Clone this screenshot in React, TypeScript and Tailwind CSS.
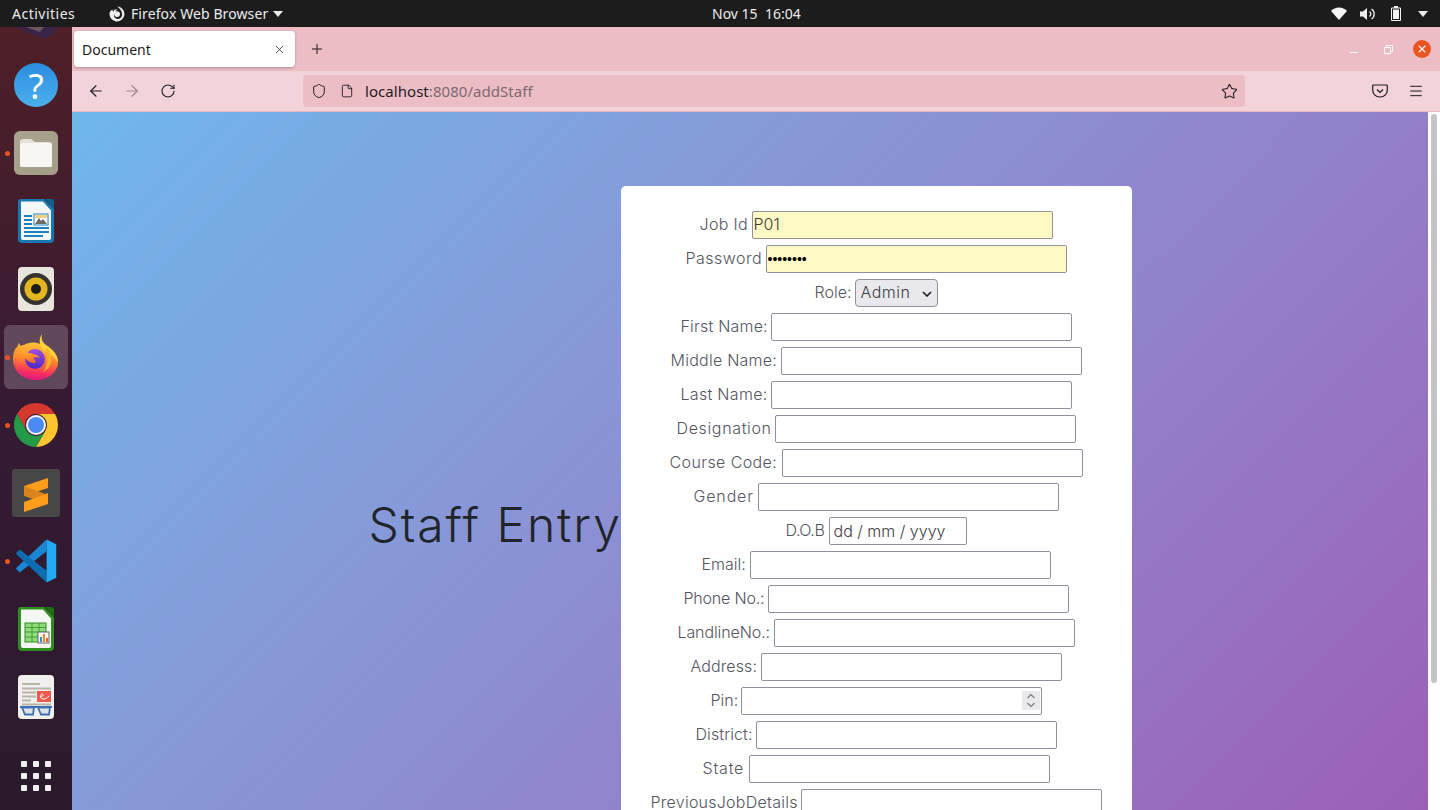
import React from "react";
import { X, Plus, ArrowLeft, ArrowRight, RotateCw, Shield, File, Star, Menu } from "lucide-react";

const ui = "font-['Noto_Sans',sans-serif]";

function Help() {
  return (
    <div className="relative flex h-[44px] w-[44px] items-center justify-center overflow-hidden rounded-full bg-linear-to-b from-[#2a8ddf] to-[#4cb0ec] font-['Noto_Sans',sans-serif] text-[35px] font-normal leading-none text-white">?</div>
  );
}
function Files() {
  return (
    <svg width="44" height="44" viewBox="0 0 44 44">
      <defs><linearGradient id="fb" x1="0" y1="0" x2="1" y2="1"><stop offset="0" stopColor="#a9a390" /><stop offset="1" stopColor="#a39c85" /></linearGradient></defs>
      <rect width="44" height="44" rx="6" fill="url(#fb)" />
      <path d="M6 11a3 3 0 0 1 3-3h8l4 3h15a3 3 0 0 1 2 3v20a2 2 0 0 1-2 2H8a2 2 0 0 1-2-2z" fill="#e4e1d9" />
      <path d="M6 15a3 3 0 0 1 3-3h27a2 2 0 0 1 2 2v20a2 2 0 0 1-2 2H8a2 2 0 0 1-2-2z" fill="#f7f6f4" />
    </svg>
  );
}
function Writer() {
  return (
    <svg width="36" height="44" viewBox="0 0 36 44">
      <path d="M2 0h24l10 10v30a4 4 0 0 1-4 4H4a4 4 0 0 1-4-4V3a3 3 0 0 1 2-3z" fill="#1878b0" />
      <path d="M27 0h6a3 3 0 0 1 3 3v7z" fill="#12628f" />
      <path d="M3 2.500h22l8 9V39a2 2 0 0 1-2 2H5a2 2 0 0 1-2-2z" fill="#f4f6f7" />
      <path d="M6 16h8v2H6zM6 20h8v2H6zM6 24h8v2H6zM6 28h25v2H6zM6 32h25v2H6zM6 36h19v2H6z" fill="#1b83bf" />
      <rect x="16" y="15" width="14" height="11" fill="#fff" stroke="#1b83bf" strokeWidth="1" />
      <path d="M17 25l4-6 2 3 2-2 4 5z" fill="#6b6b60" />
      <rect x="17" y="16" width="12" height="3" fill="#f3cf7e" />
    </svg>
  );
}
function Rhythm() {
  return (
    <svg width="36" height="44" viewBox="0 0 36 44">
      <rect width="36" height="44" rx="4" fill="#e8e5dd" />
      <circle cx="18" cy="22" r="16" fill="#35332f" />
      <circle cx="18" cy="22" r="11.500" fill="#e3b620" />
      <circle cx="18" cy="22" r="5" fill="#1d1b18" />
    </svg>
  );
}
function Firefox() {
  return (
    <svg width="46" height="46" viewBox="0 0 46 46">
      <defs>
        <linearGradient id="ff1" x1="0.6" y1="0" x2="0.45" y2="1"><stop offset="0" stopColor="#ffc53a" /><stop offset="0.45" stopColor="#ff8a2a" /><stop offset="0.8" stopColor="#f5305d" /><stop offset="1" stopColor="#e31587" /></linearGradient>
        <linearGradient id="ff2" x1="0.5" y1="0" x2="0.5" y2="1"><stop offset="0" stopColor="#9c4fe8" /><stop offset="1" stopColor="#4a2bc0" /></linearGradient>
        <linearGradient id="ff3" x1="0" y1="0" x2="0.3" y2="1"><stop offset="0" stopColor="#ffb52e" /><stop offset="1" stopColor="#ff6b2a" /></linearGradient>
      </defs>
      <path d="M6 9c1 1 1 2 1 3 2-1 3-1 4-1 3-2 8-3 13-2 5 1 9 3 12 6 5 4 9 8 9 13 0 10-10 18-22 18S0 38 0 25c0-6 2-10 3-11 1 0 2-3 3-5z" fill="url(#ff1)" />
      <path d="M29 0c-1 5 0 8 4 11 6 4 12 9 12 17-2-2-4-5-7-7-5-3-10-6-11-11-1-4 0-7 2-10z" fill="#ffd23c" />
      <circle cx="22" cy="25" r="10" fill="url(#ff2)" />
      <path d="M9 16c3 1 6 3 8 3 3 1 8 1 10 5-2-1-5-1-7 0 2 1 3 3 2 5-3 0-7-1-10-5-2-2-3-5-3-8z" fill="url(#ff3)" />
      <path d="M33 13c4 4 6 9 5 15-1 5-4 8-8 10 4-5 5-11 4-16-1-4-1-6-1-9z" fill="#ffae2e" />
    </svg>
  );
}
function Chrome() {
  return (
    <svg width="44" height="44" viewBox="0 0 44 44">
      <path d="M22 0A22 22 0 0 1 41 11H22A11 11 0 0 0 12.500 27.500L3 11A22 22 0 0 1 22 0z" fill="#d5382c" />
      <path d="M41 11A22 22 0 0 1 22 44L31.500 27.500A11 11 0 0 0 22 11z" fill="#fbc52e" />
      <path d="M3 11A22 22 0 0 0 22 44L31.500 27.500A11 11 0 0 1 12.500 27.500z" fill="#249a48" />
      <circle cx="22" cy="22" r="10" fill="#f4f6fb" />
      <circle cx="22" cy="22" r="8" fill="#4a8af4" />
    </svg>
  );
}
function Sublime() {
  return (
    <svg width="48" height="48" viewBox="0 0 48 48">
      <rect width="48" height="48" rx="3" fill="#474747" />
      <path d="M36 9v10L12 27v-10z" fill="#fd9d1b" />
      <path d="M12 17l24 9v9L12 27z" fill="#d9831b" />
      <path d="M36 24v11l-24 8V33z" fill="#fd9d1b" />
    </svg>
  );
}
function VSCode() {
  return (
    <svg width="44" height="44" viewBox="0 0 100 100">
      <path d="M74 1L4 67l9 9L74 28z" fill="#1a87d4" />
      <path d="M74 99L4 33l9-9L74 72z" fill="#0e6cb3" />
      <path d="M74 1l22 11v76L74 99z" fill="#23a8f2" />
    </svg>
  );
}
function Calc() {
  return (
    <svg width="36" height="44" viewBox="0 0 36 44">
      <path d="M2 0h24l10 10v30a4 4 0 0 1-4 4H4a4 4 0 0 1-4-4V3a3 3 0 0 1 2-3z" fill="#2f8f1e" />
      <path d="M27 0h6a3 3 0 0 1 3 3v7z" fill="#1f6f13" />
      <path d="M3 2.500h22l8 9V39a2 2 0 0 1-2 2H5a2 2 0 0 1-2-2z" fill="#f4f6f3" />
      <rect x="7" y="16" width="21" height="19" fill="#8fdc7d" stroke="#2f8f1e" strokeWidth="1" />
      <path d="M7 20.500h21M7 25h21M7 30h21M14 16v19M21 16v19" stroke="#2f8f1e" strokeWidth="0.800" />
      <rect x="20" y="25" width="11" height="11" fill="#f6f6f6" stroke="#666" strokeWidth="1" />
      <rect x="22" y="30" width="2" height="5" fill="#2f8fd0" />
      <rect x="25" y="27" width="2" height="8" fill="#ee8a1e" />
      <rect x="28" y="31" width="2" height="4" fill="#e8682a" />
    </svg>
  );
}
function Reader() {
  return (
    <svg width="36" height="44" viewBox="0 0 36 44">
      <rect width="36" height="44" rx="4" fill="#f1f0ee" />
      <path d="M4 8h18v2H4zM4 12.500h29v2H4zM4 16.500h14v2H4zM4 20.500h14v2H4zM4 24.500h9v2H4zM4 28.500h29v2H4z" fill="#b9b4a6" />
      <rect x="19" y="16" width="14" height="11" fill="#ef5a4f" />
      <path d="M22 22c3 0 4-3 2-3s-2 5 1 5 4-1 6-3" stroke="#fff" strokeWidth="1" fill="none" />
      <path d="M2 32h32M4 32.500h12l-1 7H7zM20 32.500h12l-1 7h-8z" fill="#dfe3e6" stroke="#3f6fb5" strokeWidth="1.800" />
    </svg>
  );
}

function DockItem({ children, active, dot }: { children: React.ReactNode; active?: boolean; dot?: boolean }) {
  return (
    <div className="relative flex h-[68px] w-[72px] shrink-0 items-center justify-center">
      {active && <div className="absolute left-1 top-[2px] h-[64px] w-[64px] rounded-[6px] bg-white/20" />}
      {dot && <div className="absolute left-[5px] top-[32px] h-[5px] w-[5px] rounded-full bg-[#e95420]" />}
      <div className="relative flex">{children}</div>
    </div>
  );
}

function Dock() {
  return (
    <div className="flex h-[783px] w-[72px] shrink-0 flex-col overflow-hidden bg-linear-to-b from-[#4f1f27] via-[#351a33] to-[#2a1a2c]">
      <div className="relative h-[24px] shrink-0">
        <svg width="72" height="14" viewBox="0 0 72 14" className="absolute left-0 top-0">
          <path d="M16 0h42l-6 8-8 4-8-3-10-4z" fill="#3a2448" />
          <path d="M26 0h18l-4 5z" fill="#6a5660" />
        </svg>
      </div>
      <DockItem><Help /></DockItem>
      <DockItem dot><Files /></DockItem>
      <DockItem><Writer /></DockItem>
      <DockItem><Rhythm /></DockItem>
      <DockItem active dot><Firefox /></DockItem>
      <DockItem dot><Chrome /></DockItem>
      <DockItem><Sublime /></DockItem>
      <DockItem dot><VSCode /></DockItem>
      <DockItem><Calc /></DockItem>
      <DockItem><Reader /></DockItem>
      <div className="mt-[30px] grid w-[72px] shrink-0 grid-cols-[6px_6px_6px] justify-center gap-[6px]">
        {Array.from({ length: 9 }).map((_, i) => (
          <div key={i} className="h-[6px] w-[6px] rounded-[1px] bg-[#efefef]" />
        ))}
      </div>
    </div>
  );
}

function TopBar() {
  return (
    <div className={`${ui} relative flex h-[27px] shrink-0 items-center bg-[#1c1c1c] text-[14px] text-[#ececec]`}>
      <span className="ml-[12px] w-[63px] whitespace-nowrap tracking-[0.5px]">Activities</span>
      <div className="ml-[34px] flex items-center">
        <svg width="16" height="16" viewBox="0 0 16 16">
          <path d="M8 .500a7.500 7.500 0 1 1-7.300 5.800C1.500 5 2.500 4 3.500 3.500 3.500 5 4 5.500 4.500 5.500 5 4 6.500 3 8.500 3.500 7 4 6.500 5 7 5.500c2-.5 4 .5 4 2.500 0 2-1.500 3.500-3.500 3C6 10.500 5 9 5 8c-.5 3 1 5 3.500 5 3 0 5-2.500 4.500-5.500C12.500 4.500 10.500 2 8 .500z" fill="#ececec" />
        </svg>
        <span className="ml-[6px] whitespace-nowrap tracking-[0.1px]">Firefox Web Browser</span>
        <svg width="10" height="6" viewBox="0 0 10 6" className="ml-[5px]"><path d="M0 0h10L5 6z" fill="#ececec" /></svg>
      </div>
      <span className="absolute left-[712px] whitespace-pre">Nov 15  16:04</span>
      <div className="ml-auto flex items-center">
        <svg width="16" height="13" viewBox="0 0 16 13"><path d="M0 4C2 2 5 .500 8 .500S14 2 16 4l-8 9z" fill="#f4f4f4" /></svg>
        <svg width="16" height="14" viewBox="0 0 16 14" className="ml-[13px]">
          <path d="M0 4.500h3L7 1v12L3 9.500H0z" fill="#ececec" />
          <path d="M9.500 4.500a3 3 0 0 1 0 5M11.500 2a6 6 0 0 1 0 10" stroke="#ececec" strokeWidth="1.300" fill="none" />
        </svg>
        <svg width="10" height="15" viewBox="0 0 10 15" className="ml-[15px]">
          <path d="M3 0h4v1.500h2a1 1 0 0 1 1 1V14a1 1 0 0 1-1 1H1a1 1 0 0 1-1-1V2.500a1 1 0 0 1 1-1h2z" fill="#f2f2f2" />
          <rect x="1" y="2.500" width="8" height="11.500" fill="#1c1c1c" />
          <rect x="2" y="3.500" width="6" height="9.500" fill="#f2f2f2" />
        </svg>
        <svg width="10" height="6" viewBox="0 0 10 6" className="ml-[17px] mr-[12px]"><path d="M0 0h10L5 6z" fill="#ececec" /></svg>
      </div>
    </div>
  );
}

function TabBar() {
  return (
    <div className={`${ui} flex h-[44px] shrink-0 items-center bg-[#edbdc5]`}>
      <div className="ml-[2px] flex h-[36px] w-[221px] items-center rounded-[4px] bg-white pl-[8px] pr-[9px] text-[14px] text-[#1c1b22] shadow-[0_1px_3px_rgba(0,0,0,0.25)]">
        <span>Document</span>
        <X size={13} strokeWidth={1.4} className="ml-auto" />
      </div>
      <Plus size={16} strokeWidth={1.5} className="ml-[14px] text-[#1c1b22]" />
      <div className="ml-auto flex items-center">
        <div className="mb-[-6px] h-px w-[8px] bg-white/90" />
        <svg width="9" height="9" viewBox="0 0 9 9" className="ml-[26px]">
          <path d="M.500 2.500h6v6h-6zM2.500 2.500V.500h6v6h-2" stroke="#fff" strokeWidth="1" fill="none" opacity="0.9" />
        </svg>
        <div className="ml-[20px] mr-[9px] flex h-[18px] w-[18px] items-center justify-center rounded-full bg-[#e95420]">
          <X size={12} strokeWidth={2.2} className="text-white" />
        </div>
      </div>
    </div>
  );
}

function Toolbar() {
  return (
    <div className={`${ui} flex h-[41px] shrink-0 items-center border-b border-[#e6b5be] bg-[#f1d3d9] text-[#1c1b22]`}>
      <ArrowLeft size={18} strokeWidth={1.5} className="ml-[15px]" />
      <ArrowRight size={18} strokeWidth={1.5} className="ml-[18px] opacity-40" />
      <RotateCw size={16} strokeWidth={1.6} className="ml-[19px]" />
      <div className="ml-[127px] flex h-[32px] w-[942px] items-center rounded-[4px] bg-[#edbdc5] text-[15px]">
        <Shield size={16} strokeWidth={1.5} className="ml-[8px]" />
        <File size={14} strokeWidth={1.5} className="ml-[13px]" />
        <span className="ml-[11px] whitespace-nowrap tracking-[0.05px]">localhost<span className="text-[#7c6a70]">:8080/addStaff</span></span>
        <Star size={17} strokeWidth={1.5} className="ml-auto mr-[7px]" />
      </div>
      <svg width="16" height="14" viewBox="0 0 16 14" className="ml-[127px]" fill="none" stroke="#1c1b22" strokeWidth="1.200">
        <path d="M1.500 1h13a.8.8 0 0 1 .8.8V6A7 7 0 0 1 8 13 7 7 0 0 1 .7 6V1.800a.8.8 0 0 1 .8-.8z" />
        <path d="M5 5.500L8 8.500l3-3" />
      </svg>
      <Menu size={16} strokeWidth={1.5} className="ml-[20px]" />
    </div>
  );
}

type Row = { label: string; lw: string; input: React.ReactNode };

const box = "h-[28px] w-[301px] shrink-0 rounded-[2px] border border-[#8f8f9d] bg-white px-px text-[16px] text-[#3d3d42] outline-none";

const rows: Row[] = [
  { label: "Job Id", lw: "w-[48px] tracking-[0.33px]", input: <input readOnly defaultValue="P01" className="h-[28px] w-[301px] shrink-0 rounded-[2px] border border-[#8f8f9d] bg-[#fff9c4] px-px pb-[2px] text-[16px] text-[#3d3d42] outline-none" /> },
  { label: "Password", lw: "w-[76px] tracking-[0.5px]", input: <input readOnly type="password" defaultValue="password" className="h-[28px] w-[301px] shrink-0 rounded-[2px] border border-[#8f8f9d] bg-[#fff9c4] px-[1px] font-['Liberation_Sans',sans-serif] text-[14px] font-normal text-black outline-none" /> },
  {
    label: "Role:", lw: "w-[36px]", input: (
      <div className="relative shrink-0">
        <select className="block h-[28px] w-[83px] appearance-none rounded-[4px] border border-[#8f8f9d] bg-[#e9e9ed] pb-[2px] pl-[5px] text-[16px] tracking-[0.5px] text-[#3d3d42] outline-none">
          <option>Admin</option>
        </select>
        <svg width="10" height="6" viewBox="0 0 10 6" className="pointer-events-none absolute right-[6px] top-[12px]"><path d="M1 1l4 4 4-4" stroke="#1c1b22" strokeWidth="1.600" fill="none" /></svg>
      </div>
    ),
  },
  { label: "First Name:", lw: "w-[86px] tracking-[0.2px]", input: <input readOnly className={box} /> },
  { label: "Middle Name:", lw: "w-[106px] tracking-[0.25px]", input: <input readOnly className={box} /> },
  { label: "Last Name:", lw: "w-[86px] tracking-[0.3px]", input: <input readOnly className={box} /> },
  { label: "Designation", lw: "w-[94px] tracking-[0.65px]", input: <input readOnly className={box} /> },
  { label: "Course Code:", lw: "w-[108px] tracking-[0.4px]", input: <input readOnly className={box} /> },
  { label: "Gender", lw: "w-[60px] tracking-[0.85px]", input: <input readOnly className={box} /> },
  { label: "D.O.B", lw: "w-[39px] tracking-[-0.4px]", input: <div className="flex h-[28px] w-[138px] shrink-0 items-center whitespace-pre rounded-[2px] border border-[#8f8f9d] bg-white pl-[4px] pb-px text-[16px] text-[#3d3d42]">dd / mm / yyyy</div> },
  { label: "Email:", lw: "w-[44px]", input: <input readOnly className={box} /> },
  { label: "Phone No.:", lw: "w-[80px] tracking-[-0.2px]", input: <input readOnly className={box} /> },
  { label: "LandlineNo.:", lw: "w-[92px] tracking-[-0.1px]", input: <input readOnly className={box} /> },
  { label: "Address:", lw: "w-[66px] tracking-[0.1px]", input: <input readOnly className={box} /> },
  {
    label: "Pin:", lw: "w-[26px]", input: (
      <div className="relative shrink-0">
        <input readOnly className={box} />
        <div className="absolute right-[2px] top-[4px] flex h-[19px] w-[18px] items-center justify-center bg-[#e9e9ed]">
          <svg width="10" height="15" viewBox="0 0 10 15"><path d="M1.500 5l3.500-3.500L8.500 5M1.500 10L5 13.500 8.500 10" stroke="#777" strokeWidth="1.100" fill="none" /></svg>
        </div>
      </div>
    ),
  },
  { label: "District:", lw: "w-[56px] tracking-[0.1px]", input: <input readOnly className={box} /> },
  { label: "State", lw: "w-[42px] tracking-[0.8px]", input: <input readOnly className={box} /> },
  { label: "PreviousJobDetails", lw: "w-[146px] tracking-[0.25px]", input: <input readOnly className={box} /> },
];

function Form() {
  return (
    <div className="h-[678px] w-[511px] shrink-0 rounded-[5px] bg-white pt-[25px]">
      <div className="flex flex-col gap-[6px] font-['Inter',sans-serif] font-light">
        {rows.map((r) => (
          <div key={r.label} className="flex h-[28px] items-center justify-center gap-[4px]">
            <label className={`${r.lw} mb-[2px] shrink-0 whitespace-nowrap text-[16px] leading-none text-[#55555f]`}>{r.label}</label>
            {r.input}
          </div>
        ))}
      </div>
    </div>
  );
}

export default function App() {
  return (
    <div className="flex h-[810px] w-[1440px] flex-col overflow-hidden bg-black">
      <TopBar />
      <div className="flex h-[783px]">
        <Dock />
        <div className="flex min-w-0 flex-1 flex-col">
          <TabBar />
          <Toolbar />
          <div className="flex h-[698px] overflow-hidden">
            <div className="h-[826px] w-[1356px] shrink-0 bg-linear-135 from-[#6db7ea] to-[#9b59b6]">
              <div className="flex h-[826px] items-center justify-center">
                <h1 className="w-[252px] shrink-0 whitespace-nowrap font-['Inter',sans-serif] text-[48px] font-light tracking-[1.9px] text-[#212529]">Staff Entry</h1>
                <Form />
              </div>
            </div>
            <div className="w-[12px] shrink-0 bg-white pl-[3px] pt-[2px]">
              <div className="h-[569px] w-[6px] rounded-full bg-[#c4c4c4]" />
            </div>
          </div>
        </div>
      </div>
    </div>
  );
}
